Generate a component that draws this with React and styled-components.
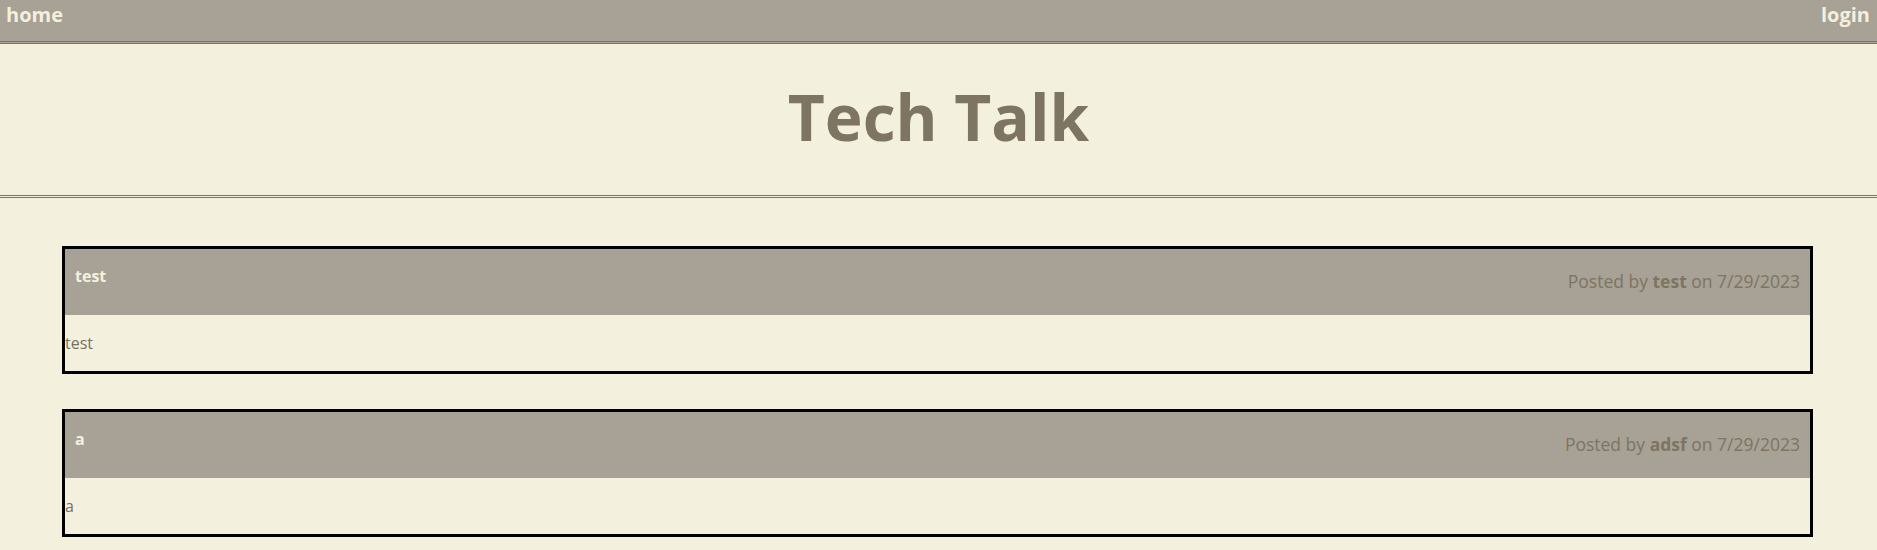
import React from "react";
import styled, { createGlobalStyle } from "styled-components";

const GlobalStyle = createGlobalStyle`
  html, body { margin: 0; padding: 0; }
  body {
    background: #f3f0dd;
    font-family: "Open Sans", "DejaVu Sans", sans-serif;
    color: #7d7462;
  }
`;

const Nav = styled.nav`
  display: flex;
  justify-content: space-between;
  align-items: flex-start;
  height: 40px;
  padding: 1px 7px 0 6px;
  box-sizing: content-box;
  background: #a8a195;
  border-bottom: 3px double #7d7462;
`;

const NavLink = styled.a`
  color: #f4f0de;
  font-weight: 700;
  font-size: 20px;
  text-decoration: none;
  line-height: normal;
`;

const Header = styled.header`
  height: 151px;
  box-sizing: content-box;
  padding: 0;
  border-bottom: 3px double #7d7462;
  text-align: center;
  display: flex;
  flex-direction: column;
  align-items: center;
`;

const Title = styled.h1`
  margin: 41px 0 0;
  font-size: 64px;
  line-height: 64px;
  font-weight: 700;
  color: #7d7462;
`;

const Main = styled.main`
  display: flex;
  flex-direction: column;
  gap: 35px;
  padding: 48px 64px 40px 62px;
`;

const Card = styled.article`
  border: 3px solid #000;
`;

const CardHeader = styled.div`
  display: flex;
  justify-content: space-between;
  align-items: flex-start;
  height: 66px;
  padding: 0 10px;
  background: #a8a195;
`;

const CardTitle = styled.h2`
  margin: 16px 0 0;
  font-size: 16px;
  font-weight: 700;
  line-height: normal;
  color: #f4f0de;
`;

const PostedBy = styled.p`
  margin: 20px 0 0;
  font-size: 17.5px;
  line-height: normal;
  color: #7d7462;
`;

const Author = styled.strong`
  font-weight: 700;
`;

const CardBody = styled.p`
  margin: 0;
  padding: 16px 0;
  font-size: 16px;
  line-height: 24px;
  color: #77705f;
`;

const posts = [
  { title: "test", author: "test", date: "7/29/2023", body: "test" },
  { title: "a", author: "adsf", date: "7/29/2023", body: "a" },
];

export default function App() {
  return (
    <>
      <GlobalStyle />
      <Nav>
        <NavLink href="#">home</NavLink>
        <NavLink href="#">login</NavLink>
      </Nav>
      <Header>
        <Title>Tech Talk</Title>
      </Header>
      <Main>
        {posts.map((p, i) => (
          <Card key={i}>
            <CardHeader>
              <CardTitle>{p.title}</CardTitle>
              <PostedBy>
                Posted by <Author>{p.author}</Author> on {p.date}
              </PostedBy>
            </CardHeader>
            <CardBody>{p.body}</CardBody>
          </Card>
        ))}
      </Main>
    </>
  );
}
